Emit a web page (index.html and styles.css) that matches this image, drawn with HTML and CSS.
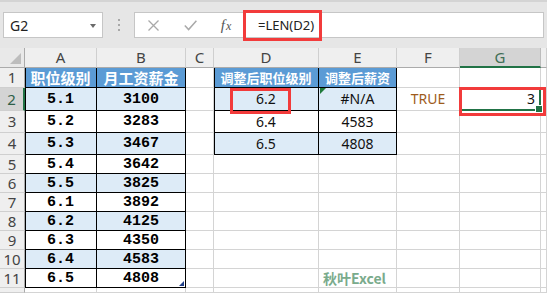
FILE: index.html
```html
<!DOCTYPE html>
<html lang="zh">
<head>
<meta charset="utf-8">
<title>Excel</title>
<link rel="stylesheet" href="styles.css">
</head>
<body>
<div class="app">
  <div class="toolbar">
    <div class="namebox"><span class="name">G2</span><span class="caret"></span></div>
    <div class="dots"><i></i><i></i><i></i></div>
    <div class="fbar">
      <span class="ico ico-x"><svg width="11" height="11" viewBox="0 0 11 11"><path d="M0.5 0.5 L10.5 10.5 M10.5 0.5 L0.5 10.5" stroke="#a9a9a9" stroke-width="1.3" fill="none"/></svg></span>
      <span class="ico ico-ok"><svg width="13" height="11" viewBox="0 0 13 11"><path d="M0.8 5.6 L4.6 9.6 L12.4 0.8" stroke="#a9a9a9" stroke-width="1.5" fill="none"/></svg></span>
      <span class="ico ico-fx"><i>f</i><i class="fx-x">x</i></span>
      <span class="formula">=LEN(D2)</span>
    </div>
  </div>
  <div class="sheet">
    <!-- header row -->
    <div class="corner"></div>
    <div class="ch">A</div>
    <div class="ch">B</div>
    <div class="ch">C</div>
    <div class="ch">D</div>
    <div class="ch">E</div>
    <div class="ch">F</div>
    <div class="ch sel">G</div>
    <div class="ch"></div>

    <!-- row 1 -->
    <div class="rh">1</div>
    <div class="t tl th">职位级别</div>
    <div class="t th">月工资薪金</div>
    <div></div>
    <div class="t tl th sm">调整后职位级别</div>
    <div class="t th sm">调整后薪资</div>
    <div></div>
    <div></div>
    <div></div>

    <!-- row 2 -->
    <div class="rh sel">2</div>
    <div class="t tl b mono">5.1</div>
    <div class="t b mono">3100</div>
    <div></div>
    <div class="t tl b num">6.2<span class="mark mark-d2"></span></div>
    <div class="t b num"><span class="err"></span>#N/A</div>
    <div class="num true">TRUE</div>
    <div class="num right active">3<span class="selbox"><span class="handle"></span></span><span class="mark mark-g2"></span></div>
    <div></div>

    <!-- row 3 -->
    <div class="rh">3</div>
    <div class="t tl mono">5.2</div>
    <div class="t mono">3283</div>
    <div></div>
    <div class="t tl num">6.4</div>
    <div class="t num">4583</div>
    <div></div>
    <div></div>
    <div></div>

    <!-- row 4 -->
    <div class="rh">4</div>
    <div class="t tl b mono">5.3</div>
    <div class="t b mono">3467</div>
    <div></div>
    <div class="t tl b num">6.5</div>
    <div class="t b num">4808</div>
    <div></div>
    <div></div>
    <div></div>

    <!-- row 5 -->
    <div class="rh">5</div>
    <div class="t tl mono">5.4</div>
    <div class="t mono">3642</div>
    <div></div><div></div><div></div><div></div><div></div><div></div>

    <!-- row 6 -->
    <div class="rh">6</div>
    <div class="t tl b mono">5.5</div>
    <div class="t b mono">3825</div>
    <div></div><div></div><div></div><div></div><div></div><div></div>

    <!-- row 7 -->
    <div class="rh">7</div>
    <div class="t tl mono">6.1</div>
    <div class="t mono">3892</div>
    <div></div><div></div><div></div><div></div><div></div><div></div>

    <!-- row 8 -->
    <div class="rh">8</div>
    <div class="t tl b mono">6.2</div>
    <div class="t b mono">4125</div>
    <div></div><div></div><div></div><div></div><div></div><div></div>

    <!-- row 9 -->
    <div class="rh">9</div>
    <div class="t tl mono">6.3</div>
    <div class="t mono">4350</div>
    <div></div><div></div><div></div><div></div><div></div><div></div>

    <!-- row 10 -->
    <div class="rh">10</div>
    <div class="t tl b mono">6.4</div>
    <div class="t b mono">4583</div>
    <div></div><div></div><div></div><div></div><div></div><div></div>

    <!-- row 11 -->
    <div class="rh">11</div>
    <div class="t tl mono">6.5</div>
    <div class="t mono">4808<span class="resize"></span></div>
    <div></div>
    <div></div>
    <div class="left"><span class="brand">秋叶Excel</span></div>
    <div></div><div></div><div></div>

    <!-- row 12 -->
    <div class="rh"></div>
    <div></div><div></div><div></div><div></div><div></div><div></div><div></div><div></div>
  </div>
</div>
</body>
</html>
```

FILE: styles.css
```css
html, body {
  margin: 0;
  padding: 0;
  background: #ffffff;
}

.app {
  width: 547px;
  height: 293px;
  overflow: hidden;
  font-family: "Noto Sans", "Noto Sans CJK SC", sans-serif;
}

/* ---------- toolbar ---------- */
.toolbar {
  box-sizing: border-box;
  height: 48px;
  background: #e6e6e6;
  border-top: 2px solid #d4d4d4;
  display: flex;
  align-items: flex-start;
  padding-top: 10px;
}

.namebox {
  box-sizing: border-box;
  margin-left: 3px;
  width: 100px;
  height: 26px;
  background: #ffffff;
  border: 1px solid #c6c6c6;
  display: flex;
  align-items: center;
  justify-content: space-between;
  padding: 0 6px 0 6px;
}

.name {
  font-size: 14px;
  color: #222;
}

.caret {
  width: 0;
  height: 0;
  border-left: 3.5px solid transparent;
  border-right: 3.5px solid transparent;
  border-top: 4px solid #6a6a6a;
  margin-top: 1px;
}

.dots {
  width: 31px;
  height: 26px;
  display: flex;
  flex-direction: column;
  align-items: center;
  justify-content: center;
  gap: 3px;
}

.dots i {
  display: block;
  width: 2px;
  height: 2px;
  background: #a8a8a8;
}

.fbar {
  box-sizing: border-box;
  flex: 1;
  margin-right: 3px;
  height: 26px;
  background: #ffffff;
  border: 1px solid #c6c6c6;
  display: flex;
  align-items: center;
}

.ico {
  display: flex;
  align-items: center;
  justify-content: center;
  height: 24px;
}

.ico-x { width: 37px; }
.ico-ok { width: 37px; }
.ico-fx {
  width: 34px;
  font-family: "Liberation Serif", serif;
  font-style: italic;
  color: #555;
  font-size: 15px;
}
.ico-fx i { font-style: italic; }
.fx-x {
  font-size: 12px;
  margin-left: 1px;
  margin-top: 3px;
}

.formula {
  box-sizing: border-box;
  width: 79px;
  height: 31px;
  border: 3px solid #f23b3b;
  display: flex;
  align-items: center;
  padding-left: 12px;
  font-size: 13px;
  color: #222;
  flex-shrink: 0;
}

/* ---------- sheet ---------- */
.sheet {
  display: grid;
  grid-template-columns: 25px 72px 89px 28px 105px 78px 63px 81px 1fr;
  grid-template-rows: 20px 20px 23px 22px 22px repeat(7, 19px) 1fr;
  height: 245px;
}

.sheet > div {
  box-sizing: border-box;
  border-right: 1px solid #d4d4d4;
  border-bottom: 1px solid #d4d4d4;
  display: flex;
  align-items: center;
  justify-content: center;
  position: relative;
  min-width: 0;
  line-height: 1;
  white-space: nowrap;
}

.sheet > .corner {
  background: #e9e9e9;
  border-right-color: #ababab;
  border-bottom-color: #ababab;
}

.corner::after {
  content: "";
  position: absolute;
  right: 3px;
  bottom: 3px;
  width: 0;
  height: 0;
  border-left: 11px solid transparent;
  border-bottom: 11px solid #bdbdbd;
}

.sheet > .ch {
  background: #efefef;
  border-right-color: #cfcfcf;
  border-bottom-color: #ababab;
  color: #444;
  font-size: 15px;
}

.sheet > .ch.sel {
  background: #d4d4d4;
  color: #3f6e55;
  border-bottom: 2px solid #217346;
  border-right-color: #bcbcbc;
}

.sheet > .rh {
  background: #efefef;
  border-right-color: #ababab;
  border-bottom-color: #cfcfcf;
  color: #444;
  font-size: 15px;
}

.sheet > .rh.sel {
  background: #d4d4d4;
  color: #2f6048;
  border-right: 2px solid #217346;
}

/* table cells */
.sheet > .t {
  border-right-color: #000;
  border-bottom-color: #000;
}

.sheet > .tl {
  box-shadow: inset 1px 0 0 #000;
}

.sheet > .th {
  background: #5b9bd5;
  color: #ffffff;
  font-family: "Noto Sans CJK SC", sans-serif;
  font-weight: 700;
  font-size: 15px;
}

.sheet > .th.sm {
  font-size: 13px;
}

.sheet > .b {
  background: #ddebf7;
}

.mono {
  font-family: "Liberation Mono", monospace;
  font-weight: 700;
  font-size: 15px;
  color: #000;
}

.num {
  font-family: "Noto Sans", sans-serif;
  font-size: 14px;
  color: #111;
}

.true {
  color: #9e5b1c;
}

.sheet > .right {
  justify-content: flex-end;
  padding-right: 5px;
}

.sheet > .left {
  justify-content: flex-start;
  padding-left: 4px;
}

/* overlays */
.err {
  position: absolute;
  left: 1px;
  top: 0;
  width: 0;
  height: 0;
  border-top: 6px solid #1f7a3a;
  border-right: 6px solid transparent;
}

.mark {
  position: absolute;
  box-sizing: border-box;
  border: 3px solid #f23b3b;
  z-index: 3;
  pointer-events: none;
}

.mark-d2 {
  left: 16px;
  top: 0;
  width: 61px;
  height: 26px;
}

.mark-g2 {
  left: -1px;
  top: -1px;
  width: 87px;
  height: 29px;
}

.selbox {
  position: absolute;
  left: 0;
  top: -1px;
  right: -1px;
  bottom: -1px;
  border: 2px solid #217346;
  z-index: 2;
}

.handle {
  position: absolute;
  right: -4px;
  bottom: -4px;
  width: 6px;
  height: 6px;
  background: #217346;
  border: 1px solid #ffffff;
}

.resize {
  position: absolute;
  right: 1px;
  bottom: 1px;
  width: 0;
  height: 0;
  border-left: 5px solid transparent;
  border-bottom: 5px solid #1f3f8a;
}

.brand {
  font-family: "Noto Sans CJK SC", sans-serif;
  font-weight: 700;
  font-size: 14px;
  color: #7aab8c;
}
```
